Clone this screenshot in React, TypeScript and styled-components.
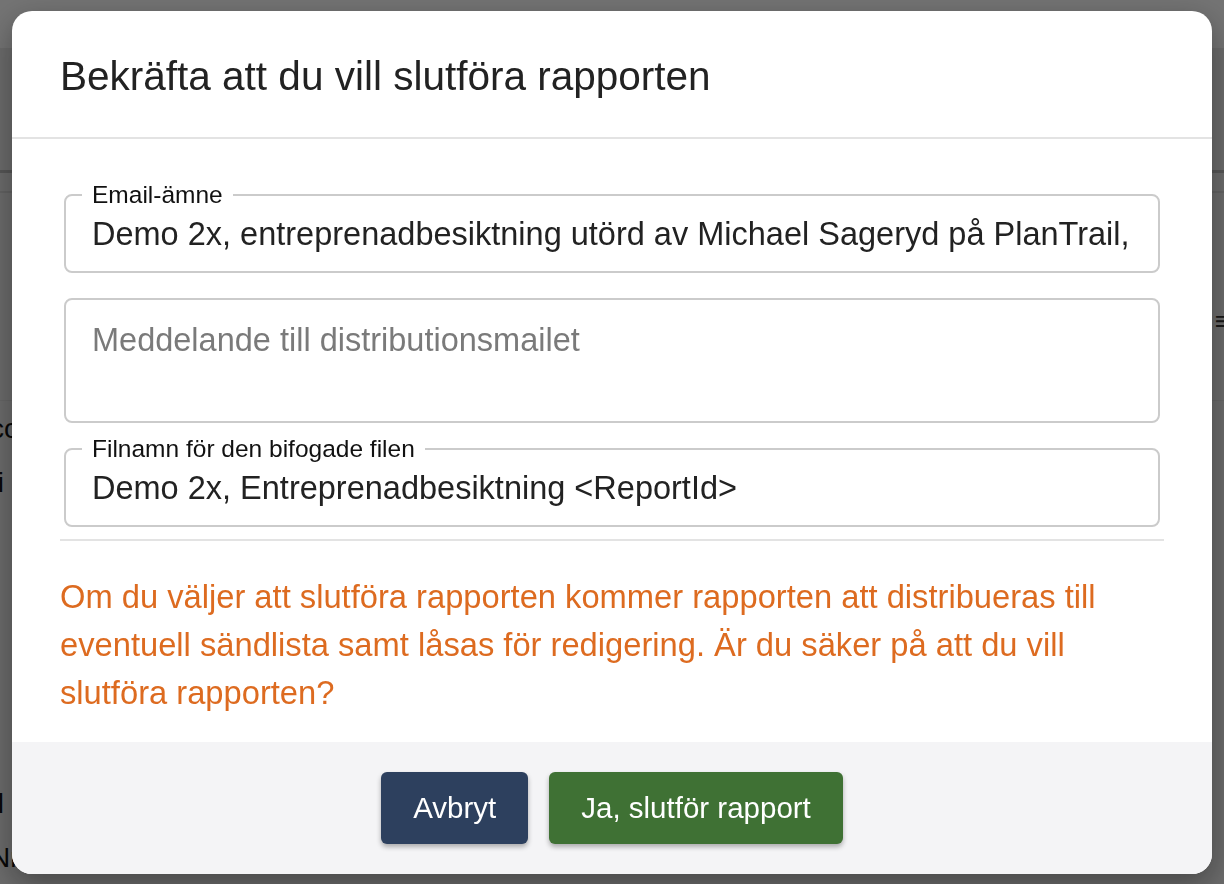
import React from 'react';
import styled, { createGlobalStyle } from 'styled-components';

const GlobalStyle = createGlobalStyle`
  html, body {
    margin: 0;
    padding: 0;
    width: 100%;
    height: 100%;
    overflow: hidden;
    font-family: "Liberation Sans", Arial, sans-serif;
  }
  * { box-sizing: border-box; }
`;

// page underneath the dimmed overlay
const Page = styled.div`
  width: 1224px;
  height: 884px;
  background: #ececec;
  display: flex;
  flex-direction: column;
`;

const TopBar = styled.div`
  height: 50px;
  background: #fff;
`;

const Toolbar = styled.div`
  height: 130px;
  border-bottom: 3px solid #bdbdbd;
`;

const SubBar = styled.div`
  height: 20px;
  border-bottom: 2px solid #d8d8d8;
`;

const ToolRow = styled.div`
  height: 212px;
  border-bottom: 1px solid #e0e0e0;
  display: flex;
  justify-content: flex-end;
  align-items: flex-start;
  padding-top: 113px;
  margin-right: -6px;
  color: #333;
  font-size: 26px;
  font-weight: 700;
`;

const PageText = styled.div<{ h: number }>`
  font-size: 28px;
  color: #111;
  margin: 0 -10px;
  height: ${p => p.h}px;
  line-height: 56px;
  white-space: nowrap;
  overflow: hidden;
`;

const Overlay = styled.div`
  position: fixed;
  inset: 0;
  background: rgba(0, 0, 0, 0.55);
  display: flex;
  align-items: flex-start;
  justify-content: center;
  padding-top: 11px;
`;

const Modal = styled.div`
  width: 1200px;
  height: 863px;
  background: #fff;
  border-radius: 20px;
  overflow: hidden;
  display: flex;
  flex-direction: column;
  box-shadow: 0 10px 30px rgba(0, 0, 0, 0.35);
`;

const Header = styled.div`
  height: 128px;
  border-bottom: 2px solid #e3e3e3;
  display: flex;
  align-items: center;
  padding: 5px 48px 0 48px;
`;

const Title = styled.h2`
  margin: 0;
  font-weight: 400;
  font-size: 40.5px;
  color: #222;
`;

const Body = styled.div`
  flex: 1;
  padding: 41px 48px 0 48px;
  display: flex;
  flex-direction: column;
`;

const Fields = styled.div`
  display: flex;
  flex-direction: column;
  padding: 0 4px 12px 4px;
  border-bottom: 2px solid #e3e3e3;
`;

const Field = styled.fieldset<{ tall?: boolean; gapTop: number }>`
  margin: ${p => p.gapTop}px 0 0 0;
  border: 2px solid #cbcbcb;
  border-radius: 8px;
  padding: 0 26px;
  height: ${p => (p.tall ? 125 : 93)}px;
  display: flex;
  align-items: ${p => (p.tall ? 'flex-start' : 'center')};
  min-width: 0;
`;

const Legend = styled.legend`
  font-size: 24.5px;
  color: #111;
  padding: 0 10px;
  margin-left: -10px;
  line-height: 30px;
`;

const Value = styled.div<{ muted?: boolean }>`
  font-size: 32.5px;
  line-height: 37px;
  color: ${p => (p.muted ? '#7a7a7a' : '#222')};
  white-space: nowrap;
  overflow: hidden;
  padding-top: ${p => (p.muted ? 22 : 0)}px;
  margin-top: ${p => (p.muted ? 0 : 6)}px;
`;

const Warning = styled.p`
  margin: 32px 0 0 0;
  font-size: 32.7px;
  line-height: 48px;
  color: #dd6b20;
`;

const Footer = styled.div`
  height: 132px;
  background: #f4f4f6;
  display: flex;
  align-items: center;
  justify-content: center;
  gap: 21px;
`;

const Button = styled.button<{ tone: 'navy' | 'green' }>`
  height: 72px;
  padding: 0 32px;
  border: none;
  border-radius: 6px;
  font-family: "Liberation Sans", Arial, sans-serif;
  font-size: 29.5px;
  color: #fff;
  background: ${p => (p.tone === 'navy' ? '#2d405e' : '#3f7134')};
  box-shadow: 0 3px 5px rgba(0, 0, 0, 0.3);
`;

const App: React.FC = () => {
  return (
    <>
      <GlobalStyle />
      <Page>
        <TopBar />
        <Toolbar />
        <SubBar />
        <ToolRow>⋮≡</ToolRow>
        <PageText h={56}>cccc Ekonomi och administration sammanställning mm</PageText>
        <PageText h={334}>.i</PageText>
        <PageText h={56}>.l</PageText>
        <PageText h={56}>Nr 1 [1234]] Anmärkning avseende detalj [2134]] på 112</PageText>
      </Page>
      <Overlay>
        <Modal>
          <Header>
            <Title>Bekräfta att du vill slutföra rapporten</Title>
          </Header>
          <Body>
            <Fields>
              <Field gapTop={0}>
                <Legend>Email-ämne</Legend>
                <Value>Demo 2x, entreprenadbesiktning utörd av Michael Sageryd på PlanTrail,</Value>
              </Field>
              <Field tall gapTop={25}>
                <Value muted>Meddelande till distributionsmailet</Value>
              </Field>
              <Field gapTop={11}>
                <Legend>Filnamn för den bifogade filen</Legend>
                <Value>Demo 2x, Entreprenadbesiktning &lt;ReportId&gt;</Value>
              </Field>
            </Fields>
            <Warning>
              Om du väljer att slutföra rapporten kommer rapporten att distribueras till
              eventuell sändlista samt låsas för redigering. Är du säker på att du vill
              slutföra rapporten?
            </Warning>
          </Body>
          <Footer>
            <Button tone="navy">Avbryt</Button>
            <Button tone="green">Ja, slutför rapport</Button>
          </Footer>
        </Modal>
      </Overlay>
    </>
  );
};

export default App;
